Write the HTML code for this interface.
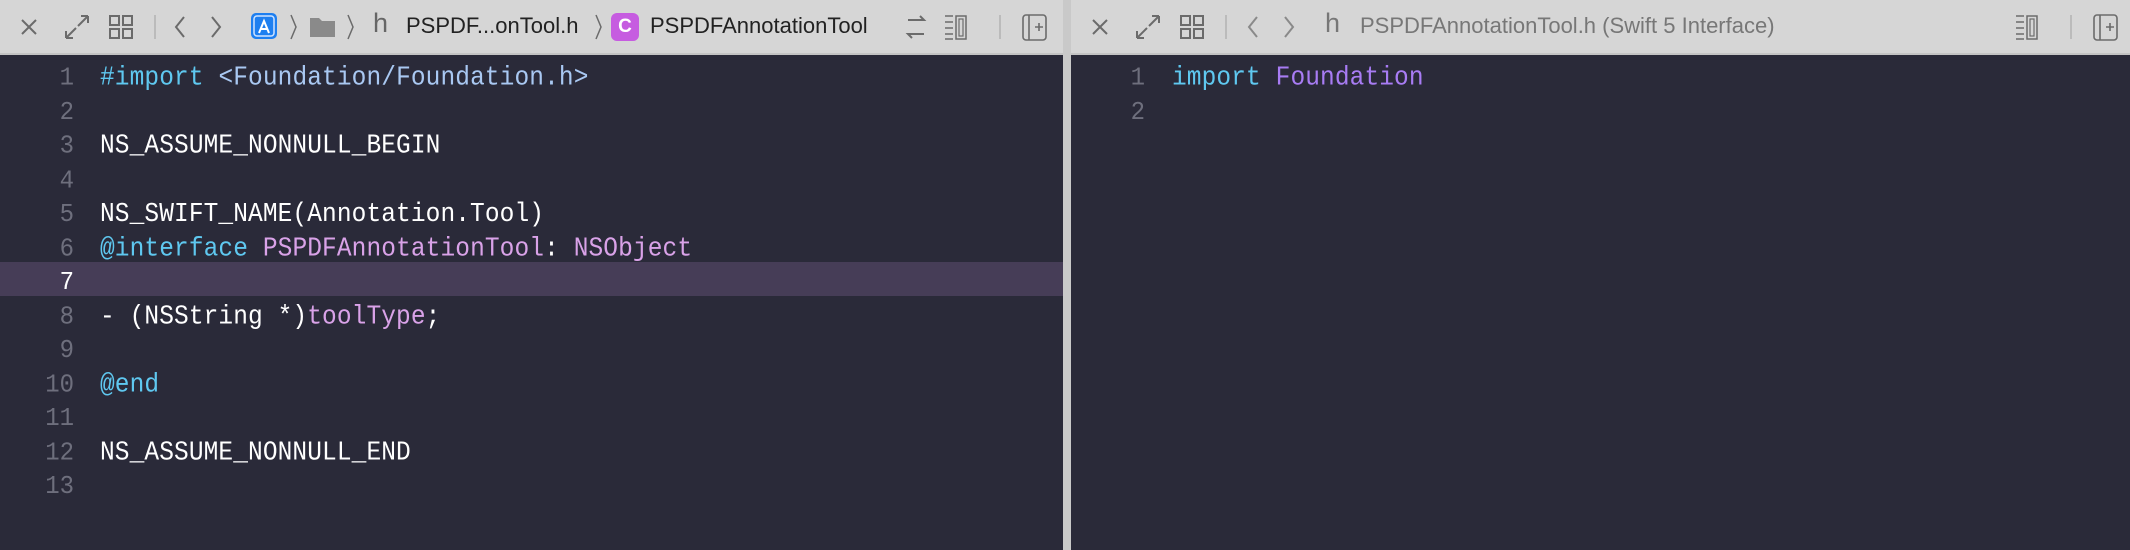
<!DOCTYPE html>
<html><head><style>
body{margin:0;width:2130px;height:550px;background:#2a2a38;overflow:hidden;font-family:"Liberation Sans",sans-serif;position:relative}
.tb{position:absolute;top:0;height:53px;background:#d6d6d6;border-bottom:2px solid #c4c4c4}
.ed{position:absolute;top:55px;bottom:0;background:#2a2a39}
.ln{position:absolute;font-family:"Liberation Mono",monospace;font-size:24px;color:#6e6f7d;text-align:right;width:60px;line-height:34px;transform:scaleY(1.08);transform-origin:0 0}
.code{position:absolute;font-family:"Liberation Mono",monospace;font-size:24.5px;color:#ffffff;line-height:31.5px;white-space:pre;letter-spacing:0.1px;transform:scaleY(1.08);transform-origin:0 0}
.k{color:#5fc8f0}.s{color:#a9c8f2}.p{color:#d9a2e8}.q{color:#a87cf4}
.t{position:absolute;top:13px;font-size:22px;color:#222;white-space:nowrap}
svg{position:absolute}
</style></head><body>
<div class="tb" style="left:0;width:1063px"></div>
<div class="tb" style="left:1071px;width:1059px"></div>
<div style="position:absolute;left:1063px;top:0;width:8px;height:550px;background:#c9c9c9"></div>
<div class="ed" style="left:0;width:1063px"></div>
<div class="ed" style="left:1071px;width:1059px"></div>
<div style="position:absolute;left:0;top:262px;width:1063px;height:34px;background:#463d57"></div>

<svg width="1063" height="53" style="left:0;top:0" fill="none" stroke="#6b6b6b" stroke-width="2">
<path d="M22 20l14 14M36 20L22 34"/>
<path d="M66 38l10-10M66 38v-7M66 38h7M88 16L78 26M88 16v7M88 16h-7"/>
<rect x="110" y="16" width="9" height="9"/><rect x="123" y="16" width="9" height="9"/><rect x="110" y="29" width="9" height="9"/><rect x="123" y="29" width="9" height="9"/>
<path d="M155 15v24" stroke="#bbb"/>
<path d="M184 17l-8 10 8 10M212 17l8 10-8 10"/>
<path d="M291 15l5 12-5 12M348 15l5 12-5 12M596 15l5 12-5 12" stroke-width="1.5"/>
<path d="M908 20h16l-4-4M924 34h-16l4 4" stroke-width="2"/>
<path d="M945 16h8M945 22h8M945 28h8M945 34h8M945 39h8" stroke-width="1.5"/><rect x="956" y="16" width="10" height="23" stroke-width="1.5"/><rect x="959" y="19" width="4" height="17" stroke-width="1.2"/>
<path d="M1000 15v24" stroke="#bbb"/>
<rect x="1023" y="15" width="23" height="25" rx="3" stroke-width="1.6"/><path d="M1029 15v25M1035 27h8M1039 23v8" stroke-width="1.6"/>
</svg>
<svg width="30" height="30" style="left:250px;top:12px"><rect x="1" y="1" width="26" height="26" rx="5" fill="#1e7ff0"/><rect x="4" y="4" width="20" height="20" rx="3" fill="none" stroke="#cfe4ff" stroke-width="1.5"/><path d="M9 21l5-12 5 12M10 17h8" stroke="#fff" stroke-width="2" fill="none"/></svg>
<svg width="30" height="30" style="left:308px;top:13px"><path d="M2 5h9l3 3h13v16H2z" fill="#8a8a8a"/></svg>
<div class="t" style="left:373px;top:8px;font-size:27px;color:#666">h</div>
<div class="t" style="left:406px">PSPDF...onTool.h</div>
<div style="position:absolute;left:611px;top:13px;width:28px;height:28px;border-radius:6px;background:#c65ce0;color:#fff;font-size:19px;font-weight:bold;text-align:center;line-height:28px">C</div>
<div class="t" style="left:650px">PSPDFAnnotationTool</div>

<svg width="1059" height="53" style="left:1071px;top:0" fill="none" stroke="#6b6b6b" stroke-width="2">
<path d="M22 20l14 14M36 20L22 34"/>
<path d="M66 38l10-10M66 38v-7M66 38h7M88 16L78 26M88 16v7M88 16h-7"/>
<rect x="110" y="16" width="9" height="9"/><rect x="123" y="16" width="9" height="9"/><rect x="110" y="29" width="9" height="9"/><rect x="123" y="29" width="9" height="9"/>
<path d="M155 15v24" stroke="#bbb"/>
<path d="M186 17l-8 10 8 10M214 17l8 10-8 10" stroke="#8a8a8a"/>
<path d="M945 16h8M945 22h8M945 28h8M945 34h8M945 39h8" stroke-width="1.5"/><rect x="956" y="16" width="10" height="23" stroke-width="1.5"/><rect x="959" y="19" width="4" height="17" stroke-width="1.2"/>
<path d="M1000 15v24" stroke="#bbb"/>
<rect x="1023" y="15" width="23" height="25" rx="3" stroke-width="1.6"/><path d="M1029 15v25M1035 27h8M1039 23v8" stroke-width="1.6"/>
</svg>
<div class="t" style="left:1325px;top:8px;font-size:27px;color:#777">h</div>
<div class="t" style="left:1360px;color:#777">PSPDFAnnotationTool.h (Swift 5 Interface)</div>

<div class="ln" style="left:14px;top:62px;line-height:31.5px">1<br>2<br>3<br>4<br>5<br>6<br><span style="color:#fff">7</span><br>8<br>9<br>10<br>11<br>12<br>13</div>
<div class="code" style="left:100px;top:62px"><span class="k">#import</span> <span class="s">&lt;Foundation/Foundation.h&gt;</span>

NS_ASSUME_NONNULL_BEGIN

NS_SWIFT_NAME(Annotation.Tool)
<span class="k">@interface</span> <span class="p">PSPDFAnnotationTool</span>: <span class="p">NSObject</span>

- (NSString *)<span class="p">toolType</span>;

<span class="k">@end</span>

NS_ASSUME_NONNULL_END
</div>

<div class="ln" style="left:1085px;top:62px;line-height:31.5px">1<br>2</div>
<div class="code" style="left:1172px;top:62px"><span class="k">import</span> <span class="q">Foundation</span></div>
</body></html>
